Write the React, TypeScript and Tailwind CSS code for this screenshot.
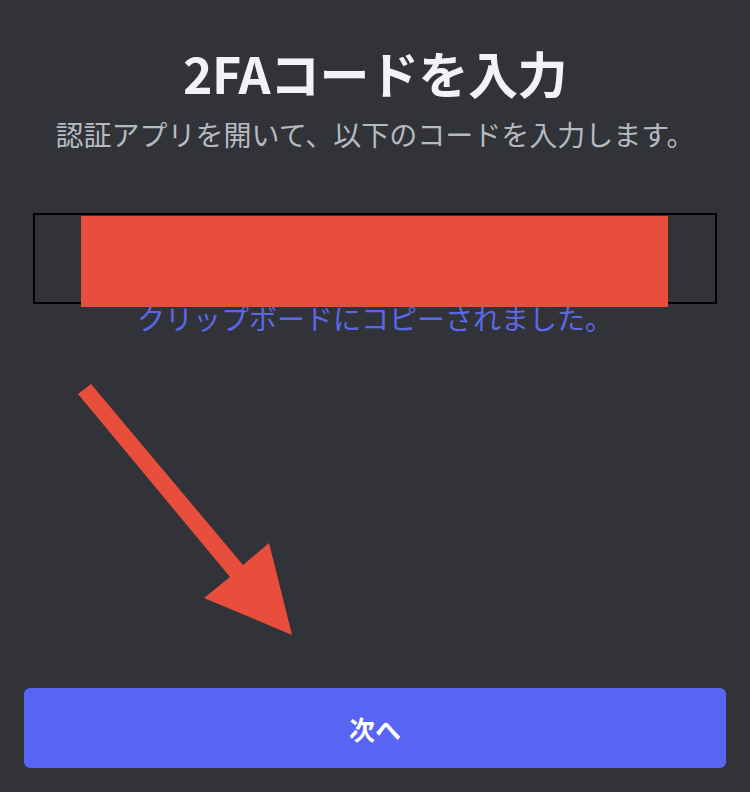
const JP = 'font-["Noto_Sans_CJK_JP","Noto_Sans",sans-serif]';

export default function App() {
  return (
    <div className={`relative flex h-[792px] w-[750px] flex-col items-center overflow-hidden bg-[#313338] ${JP}`}>
      {/* ── Header ── */}
      <h1 className="pt-[44px] text-[50px] font-bold leading-[56px] tracking-[-0.5px] text-[#f2f3f5]">2FAコードを入力</h1>
      <p className="mt-[17px] text-[28px] leading-[34px] text-[#b5bac1]">
        認証アプリを開いて、以下のコードを入力します。
      </p>

      {/* ── Code box ── */}
      <div className="mt-[62px] h-[91px] w-[684px] border-2 border-black" />
      <p className="-mt-[2px] text-[28px] leading-[32px] text-[#5b68e8]">クリップボードにコピーされました。</p>

      {/* ── Next button ── */}
      <button className="mt-auto mb-[24px] flex h-[80px] w-[702px] items-center justify-center rounded-md bg-[#5865f2] text-[26px] font-semibold text-white">
        次へ
      </button>

      {/* ── Redaction + annotation ── */}
      <div className="absolute left-[81px] top-[216px] h-[91px] w-[587px] bg-[#e94e3d]" />
      <svg className="absolute left-0 top-0" width="750" height="792" viewBox="0 0 750 792">
        <polygon points="78,394 91,384 243,565 269,543 292,635 204,598 230,577" fill="#e94e3d" />
      </svg>
    </div>
  );
}
